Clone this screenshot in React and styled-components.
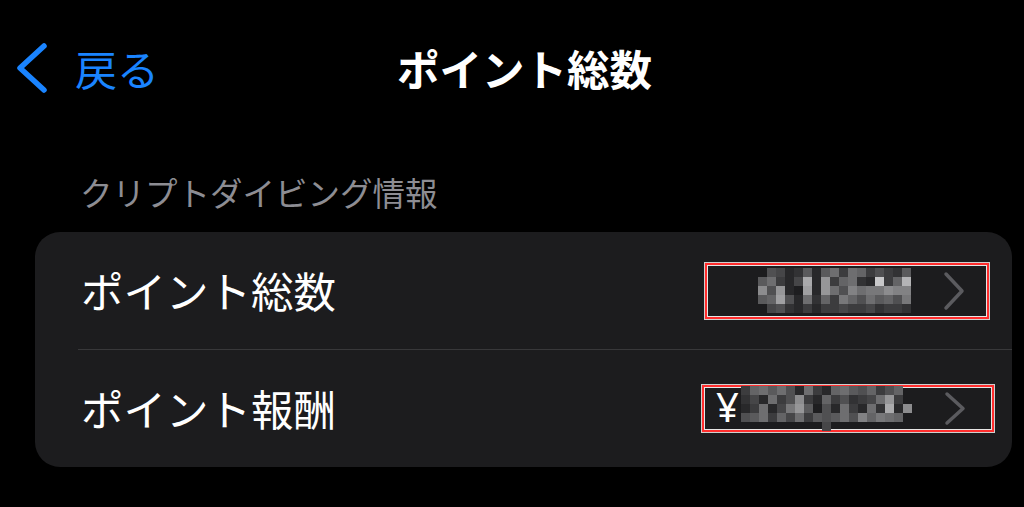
import React from "react";
import styled, { createGlobalStyle } from "styled-components";

const Global = createGlobalStyle`
  html, body { margin: 0; padding: 0; background: #000; }
  body { font-family: "Noto Sans CJK JP", "Noto Sans", sans-serif; }
`;

const Page = styled.div`
  width: 1024px;
  height: 507px;
  background: #000;
  overflow: hidden;
`;

const NavBar = styled.div`
  display: flex;
  align-items: center;
  height: 136px;
  padding-left: 15px;
`;

const BackButton = styled.div`
  display: flex;
  align-items: center;
  gap: 26px;
  color: #1a84ff;
  font-size: 42px;
  line-height: 1;
`;

const Title = styled.div`
  margin-left: 238px;
  color: #fff;
  font-size: 42.5px;
  font-weight: 700;
  line-height: 1;
`;

const SectionHeader = styled.div`
  display: flex;
  align-items: center;
  height: 80px;
  padding: 16px 0 0 80px;
  color: #8d8d93;
  font-size: 32.5px;
  line-height: 1;
`;

const Card = styled.div`
  margin: 0 12px 0 35px;
  background: #1c1c1e;
  border-radius: 25px;
`;

const Row = styled.div`
  display: flex;
  align-items: center;
  justify-content: space-between;
  height: 117px;
  padding-left: 46px;
  padding-right: ${(p) => p.$right}px;
`;

const Label = styled.div`
  color: #fff;
  font-size: 42.5px;
  line-height: 1;
`;

const Divider = styled.div`
  height: 1px;
  margin-left: 43px;
  background: #38383a;
`;

const ValueBox = styled.div`
  display: flex;
  align-items: center;
  box-sizing: border-box;
  height: ${(p) => p.$h}px;
  padding: 0 ${(p) => p.$pr}px 0 ${(p) => p.$pl}px;
  border: 1px solid #cfcfcf;
  box-shadow: inset 0 0 0 2px #ff2d2d, inset 0 0 0 3px #e6e6e6;
`;

const Yen = styled.span`
  color: #fff;
  font-family: "Noto Sans", "DejaVu Sans", sans-serif;
  font-size: 40px;
  line-height: 1;
  width: 25px;
  margin-top: -4px;
`;

const Chevron = styled.svg`
  margin-left: 32px;
  flex: none;
`;

const MosaicSvg = styled.svg`
  display: block;
  flex: none;
  shape-rendering: crispEdges;
`;

const mosaic1 = [
  [0, 80, 70, 40, 50, 90, 40, 90, 110, 60, 110, 100, 60, 80, 60, 50, 90],
  [90, 110, 60, 40, 70, 170, 40, 150, 60, 100, 110, 50, 40, 200, 60, 100, 180],
  [140, 80, 150, 40, 30, 160, 40, 150, 110, 80, 130, 110, 120, 120, 140, 130, 130],
  [90, 100, 160, 80, 40, 110, 50, 100, 60, 120, 100, 80, 110, 90, 100, 80, 120],
  [0, 70, 80, 50, 40, 60, 40, 60, 60, 70, 60, 60, 70, 50, 60, 60, 50],
];

const mosaic2 = [
  [60, 100, 110, 90, 110, 80, 40, 110, 60, 40, 100, 110, 90, 80, 100, 60, 80, 100, 0],
  [50, 70, 40, 110, 60, 80, 140, 60, 40, 100, 60, 80, 50, 60, 70, 110, 150, 60, 0],
  [40, 60, 110, 40, 70, 120, 150, 90, 30, 80, 40, 110, 60, 40, 110, 50, 170, 40, 140],
  [80, 90, 110, 60, 100, 70, 110, 60, 90, 80, 90, 110, 80, 130, 100, 120, 110, 100, 0],
  [0, 0, 0, 0, 0, 0, 0, 0, 0, 70, 0, 0, 0, 0, 0, 0, 0, 0, 0],
];

function Mosaic({ data, cell = 9 }) {
  const rows = data.length;
  const cols = data[0].length;
  return (
    <MosaicSvg width={cols * cell} height={rows * cell} viewBox={`0 0 ${cols * cell} ${rows * cell}`}>
      {data.map((row, y) =>
        row.map((v, x) =>
          v ? (
            <rect key={`${x}-${y}`} x={x * cell} y={y * cell} width={cell} height={cell} fill={`rgb(${v},${v},${v + 2})`} />
          ) : null
        )
      )}
    </MosaicSvg>
  );
}

function DisclosureChevron({ h }) {
  return (
    <Chevron width="22" height={h} viewBox={`0 0 22 ${h}`}>
      <polyline
        points={`3,3 19,${h / 2} 3,${h - 3}`}
        fill="none"
        stroke="#5b5b5f"
        strokeWidth="3.5"
        strokeLinecap="round"
        strokeLinejoin="round"
      />
    </Chevron>
  );
}

export default function App() {
  return (
    <Page>
      <Global />
      <NavBar>
        <BackButton>
          <svg width="34" height="52" viewBox="0 0 34 52">
            <polyline points="29,4 5,26 29,48" fill="none" stroke="#1a84ff" strokeWidth="5.5" strokeLinecap="round" strokeLinejoin="round" />
          </svg>
          <span>戻る</span>
        </BackButton>
        <Title>ポイント総数</Title>
      </NavBar>
      <SectionHeader>クリプトダイビング情報</SectionHeader>
      <Card>
        <Row $right={22}>
          <Label>ポイント総数</Label>
          <ValueBox $h={58} $pl={53} $pr={24}>
            <Mosaic data={mosaic1} />
            <DisclosureChevron h={40} />
          </ValueBox>
        </Row>
        <Divider />
        <Row $right={17}>
          <Label>ポイント報酬</Label>
          <ValueBox $h={49} $pl={14} $pr={28}>
            <Yen>¥</Yen>
            <Mosaic data={mosaic2} />
            <DisclosureChevron h={35} />
          </ValueBox>
        </Row>
      </Card>
    </Page>
  );
}
